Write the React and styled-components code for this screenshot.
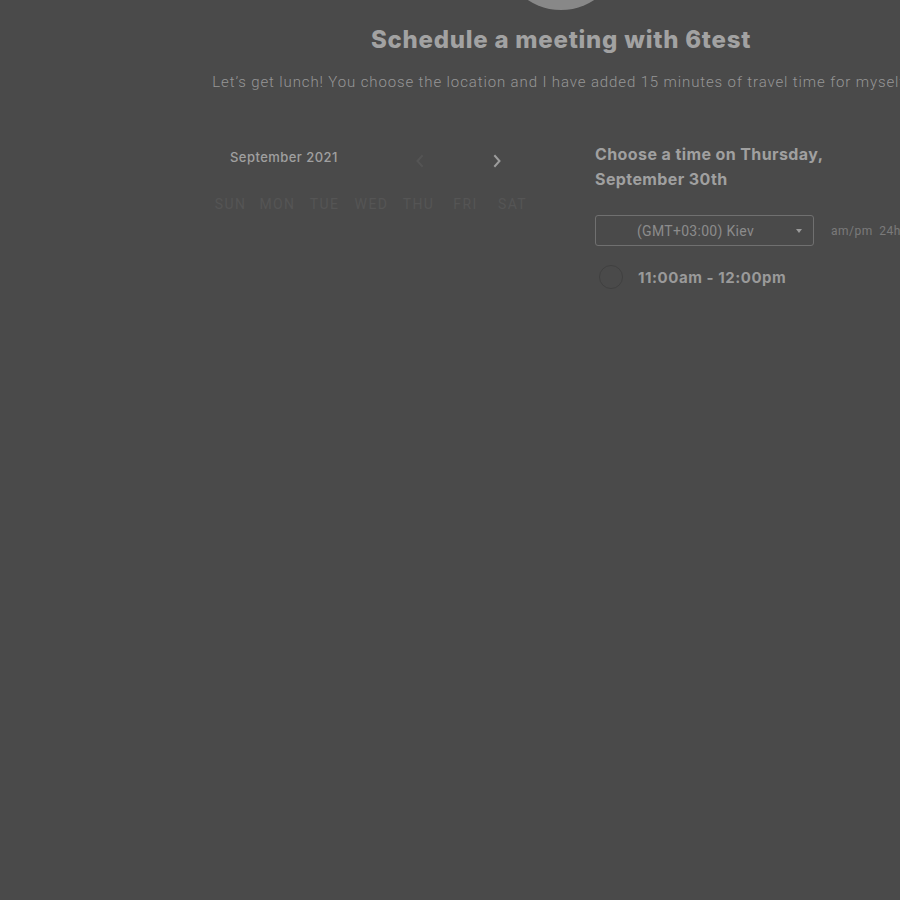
import React from "react";
import styled, { createGlobalStyle } from "styled-components";

const Global = createGlobalStyle`
  html, body { margin: 0; padding: 0; background: #4a4a4a; overflow: hidden; }
  body { font-family: Inter, "Liberation Sans", sans-serif; }
`;

const Page = styled.div`
  width: 1122px;
  height: 900px;
  display: flex;
  flex-direction: column;
  align-items: center;
  background: #4a4a4a;
`;

const Avatar = styled.div`
  width: 120px;
  height: 120px;
  border-radius: 50%;
  background: #888888;
  margin-top: -110px;
  flex-shrink: 0;
`;

const Title = styled.h1`
  margin: 14px 0 0;
  font-family: Inter, "Liberation Sans", sans-serif;
  font-weight: 800;
  font-size: 24px;
  line-height: 32px;
  color: #a2a2a2;
  letter-spacing: 0.75px;
`;

const Subtitle = styled.p`
  margin: 16px 0 0;
  font-family: Roboto, "Liberation Sans", sans-serif;
  font-weight: 300;
  font-size: 15px;
  line-height: 20px;
  color: #969696;
  white-space: nowrap;
  letter-spacing: 0.88px;
`;

const Main = styled.div`
  width: 714px;
  margin-top: 43px;
  display: flex;
`;

const Calendar = styled.div`
  width: 360px;
  flex-shrink: 0;
`;

const CalHeader = styled.div`
  height: 44px;
  display: flex;
  align-items: center;
  padding-left: 26px;
`;

const Month = styled.div`
  font-size: 13px;
  font-weight: 500;
  color: #a0a0a0;
  width: 182px;
  letter-spacing: 0.45px;
`;

const NavButton = styled.button`
  background: none;
  border: none;
  padding: 0;
  width: 16px;
  height: 16px;
  display: flex;
  align-items: center;
  justify-content: center;
  margin-top: 8px;
  margin-right: ${(p) => p.$gap || 0}px;
  color: ${(p) => (p.$disabled ? "#545454" : "#9c9c9c")};
`;

const Weekdays = styled.div`
  display: grid;
  grid-template-columns: repeat(7, 47px);
  margin-top: 17px;
  padding-left: 3px;
`;

const Weekday = styled.div`
  text-align: center;
  font-family: Roboto, "Liberation Sans", sans-serif;
  font-size: 14px;
  letter-spacing: 1.4px;
  color: #555555;
  text-transform: uppercase;
`;

const Panel = styled.div`
  flex: 1;
  margin-left: 21px;
  padding: 7px 0 0 10px;
`;

const Heading = styled.h2`
  margin: 0;
  font-size: 16px;
  line-height: 25px;
  font-weight: 700;
  color: #a0a0a0;
  width: 260px;
  letter-spacing: 0.4px;
`;

const SelectRow = styled.div`
  display: flex;
  align-items: center;
  margin-top: 23px;
`;

const Select = styled.div`
  width: 219px;
  height: 31px;
  box-sizing: border-box;
  border: 1px solid #707070;
  border-radius: 3px;
  display: flex;
  align-items: center;
  position: relative;
  padding-left: 41px;
  font-family: Roboto, "Liberation Sans", sans-serif;
  font-size: 14px;
  letter-spacing: 0.3px;
  color: #8c8c8c;
`;

const Caret = styled.span`
  position: absolute;
  right: 11px;
  top: 13px;
  width: 0;
  height: 0;
  border-left: 3.5px solid transparent;
  border-right: 3.5px solid transparent;
  border-top: 4px solid #9a9a9a;
`;

const Format = styled.div`
  margin-left: 17px;
  font-family: Roboto, "Liberation Sans", sans-serif;
  font-size: 12px;
  letter-spacing: 0.5px;
  color: #7a7a7a;
  white-space: nowrap;
  word-spacing: 3px;
`;

const Slot = styled.div`
  display: flex;
  align-items: center;
  margin-top: 19px;
  padding-left: 4px;
`;

const Radio = styled.span`
  width: 24px;
  height: 24px;
  box-sizing: border-box;
  border-radius: 50%;
  border: 1px solid #404040;
  margin-right: 15px;
`;

const SlotText = styled.span`
  font-size: 15px;
  font-weight: 700;
  letter-spacing: 0.55px;
  color: #9a9a9a;
`;

const Chevron = ({ dir }) => (
  <svg width="10" height="14" viewBox="0 0 10 14" fill="none">
    <path
      d={dir === "left" ? "M7 2 L2.5 7 L7 12" : "M3 2 L7.5 7 L3 12"}
      stroke="currentColor"
      strokeWidth="2"
      strokeLinecap="square"
    />
  </svg>
);

const days = ["Sun", "Mon", "Tue", "Wed", "Thu", "Fri", "Sat"];

export default function App() {
  return (
    <>
      <Global />
      <Page>
        <Avatar />
        <Title>Schedule a meeting with 6test</Title>
        <Subtitle>
          Let’s get lunch! You choose the location and I have added 15 minutes of travel time for myself.
        </Subtitle>
        <Main>
          <Calendar>
            <CalHeader>
              <Month>September 2021</Month>
              <NavButton $disabled $gap={61} aria-label="Previous month">
                <Chevron dir="left" />
              </NavButton>
              <NavButton aria-label="Next month">
                <Chevron dir="right" />
              </NavButton>
            </CalHeader>
            <Weekdays>
              {days.map((d) => (
                <Weekday key={d}>{d}</Weekday>
              ))}
            </Weekdays>
          </Calendar>
          <Panel>
            <Heading>Choose a time on Thursday, September 30th</Heading>
            <SelectRow>
              <Select>
                (GMT+03:00) Kiev
                <Caret />
              </Select>
              <Format>am/pm 24h</Format>
            </SelectRow>
            <Slot>
              <Radio />
              <SlotText>11:00am - 12:00pm</SlotText>
            </Slot>
          </Panel>
        </Main>
      </Page>
    </>
  );
}
